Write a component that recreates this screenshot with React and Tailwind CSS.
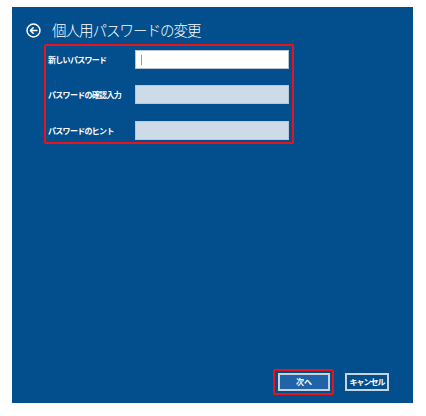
import React from "react";

const jp = { fontFamily: '"Noto Sans CJK JP", "Noto Sans", sans-serif' };

function BackIcon() {
  return (
    <svg width="15" height="15" viewBox="0 0 16 16" fill="none">
      <circle cx="8" cy="8" r="6.9" stroke="white" strokeWidth="1.6" />
      <path d="M11.6 8H4.8M7.6 5.1L4.7 8l2.9 2.9" stroke="white" strokeWidth="1.7" strokeLinecap="round" strokeLinejoin="round" />
    </svg>
  );
}

function Row({ label, children }) {
  return (
    <div className="flex items-center h-[19px]">
      <div className="w-[89px] pl-[2px] text-white font-semibold text-[8px] tracking-[-0.7px] leading-none">{label}</div>
      <div className="flex-1 h-full">{children}</div>
    </div>
  );
}

export default function App() {
  return (
    <div className="w-[426px] h-[416px] bg-white pt-[7px] pl-[12px]" style={jp}>
      <div className="w-[401px] h-[396px] bg-[#034e8d] flex flex-col">
        <div className="flex items-center pl-[14px] pt-[15px] h-[31px]">
          <BackIcon />
          <span className="ml-[11px] text-white font-light text-[14.5px] tracking-[-1px] leading-none">個人用パスワードの変更</span>
        </div>
        <div className="ml-[32px] mt-[6px] w-[250px] h-[100px] border-2 border-[#e8141c] rounded-[2px] flex flex-col pt-[4px] pr-[3px]">
          <Row label="新しいパスワード">
            <div className="h-full bg-white border border-[#b8c4d0] flex items-center pl-[5px]">
              <div className="w-px h-[10px] bg-[#9a9a9a]" />
            </div>
          </Row>
          <div className="h-[16px]" />
          <Row label="パスワードの確認入力">
            <div className="h-full bg-[#cddbe8] border border-[#b9c9d9]" />
          </Row>
          <div className="h-[17px]" />
          <Row label="パスワードのヒント">
            <div className="h-full bg-[#cddbe8] border border-[#b9c9d9]" />
          </Row>
        </div>
        <div className="mt-auto mb-[8px] flex items-center justify-end pr-[24px]">
          <div className="border-2 border-[#e8141c] rounded-[2px] pl-[3px] pr-[2px] py-[2px]">
            <div className="w-[52px] h-[18px] bg-[#2063a6] border-2 border-[#c9d3de] flex items-center justify-center text-white font-bold text-[8px] leading-none">
              次へ
            </div>
          </div>
          <div className="ml-[11px] w-[44px] h-[18px] border-2 border-[#c9d3de] flex items-center justify-center text-white font-bold text-[8px] tracking-[-1px] leading-none">
            キャンセル
          </div>
        </div>
      </div>
    </div>
  );
}
